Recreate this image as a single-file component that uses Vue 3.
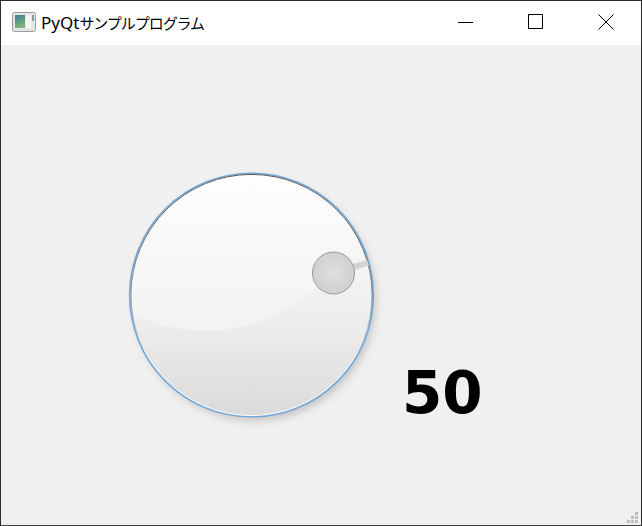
<template>
  <div class="window">
    <div class="titlebar">
      <svg class="app-icon" width="24" height="20" viewBox="0 0 24 20">
        <defs>
          <linearGradient id="iconPane" x1="0" y1="0" x2="0.3" y2="1">
            <stop offset="0" stop-color="#3f7f96" />
            <stop offset="1" stop-color="#7fb37a" />
          </linearGradient>
        </defs>
        <rect x="0.5" y="0.5" width="23" height="19" rx="2" fill="#e4e6e6" stroke="#9a9da0" />
        <rect x="3" y="3" width="10" height="13" fill="url(#iconPane)" />
        <rect x="14" y="3" width="5" height="13" fill="#f4f5f5" />
        <rect x="20" y="3" width="2" height="6" fill="#8d9a9c" />
      </svg>
      <span class="title"><span class="title-latin">PyQt</span><span class="title-kana">サンプルプログラム</span></span>
      <div class="controls">
        <button v-for="c in controls" :key="c.name" class="control" :aria-label="c.name">
          <svg width="16" height="16" viewBox="0 0 16 16">
            <path :d="c.d" fill="none" stroke="#000" stroke-width="1" />
          </svg>
        </button>
      </div>
    </div>
    <div class="content">
      <svg class="dial" width="270" height="270" viewBox="0 0 270 270">
        <defs>
          <linearGradient id="dialBody" x1="0" y1="0" x2="0" y2="1">
            <stop offset="0" stop-color="#ffffff" />
            <stop offset="0.6" stop-color="#eeeeee" />
            <stop offset="1" stop-color="#dadada" />
          </linearGradient>
          <linearGradient id="dialGloss" x1="0" y1="0" x2="0" y2="1">
            <stop offset="0" stop-color="#ffffff" />
            <stop offset="0.5" stop-color="#f8f8f8" />
            <stop offset="1" stop-color="#f3f3f3" />
          </linearGradient>
          <linearGradient id="dialEdge" x1="0" y1="0" x2="0" y2="1">
            <stop offset="0" stop-color="#555555" />
            <stop offset="0.5" stop-color="#8a8a8a" />
            <stop offset="0.78" stop-color="#ffffff" />
            <stop offset="1" stop-color="#ffffff" />
          </linearGradient>
          <radialGradient id="knobFill">
            <stop offset="0" stop-color="#dfdfdf" />
            <stop offset="1" stop-color="#d0d0d0" />
          </radialGradient>
          <clipPath id="dialClip">
            <circle cx="131.5" cy="135" r="121" />
          </clipPath>
          <filter id="dialShadow" x="-20%" y="-20%" width="140%" height="140%">
            <feGaussianBlur stdDeviation="5" />
          </filter>
        </defs>
        <circle cx="135" cy="140" r="120" fill="#a8a8a8" opacity="0.7" filter="url(#dialShadow)" />
        <circle cx="131.5" cy="135" r="121.6" fill="url(#dialBody)" stroke="#72a8d8" stroke-width="2" />
        <g clip-path="url(#dialClip)">
          <path d="M8 150 C60 182 170 190 240 72 L260 0 L0 0 Z" fill="url(#dialGloss)" />
        </g>
        <circle cx="131.5" cy="135" r="120.6" fill="none" stroke="url(#dialEdge)" stroke-width="1" />
        <line x1="232" y1="107.5" x2="248" y2="102.8" stroke="#d4d4d4" stroke-width="6" />
        <circle cx="213.5" cy="113" r="21" fill="url(#knobFill)" stroke="#9c9c9c" stroke-width="1" />
      </svg>
      <div class="value">50</div>
    </div>
    <div class="grip">
      <i v-for="n in gripCells" :key="n" :class="{ off: n === 0 || n === 1 || n === 3 }"></i>
    </div>
  </div>
</template>

<script setup>
const controls = [
  { name: 'minimize', d: 'M0 8.5H15' },
  { name: 'maximize', d: 'M.5 .5H14.5V14.5H.5Z' },
  { name: 'close', d: 'M.5 .5L15.5 15.5M15.5 .5L.5 15.5' }
]
const gripCells = [0, 1, 2, 3, 4, 5, 6, 7, 8]
</script>

<style>
html, body {
  margin: 0;
  background: #f0f0f0;
}
</style>

<style scoped>
.window {
  position: relative;
  box-sizing: border-box;
  width: 642px;
  height: 526px;
  border: 1px solid #2b2b2b;
  border-bottom-color: #444;
  display: flex;
  flex-direction: column;
  background: #f0f0f0;
  overflow: hidden;
}

.titlebar {
  height: 44px;
  flex: none;
  display: flex;
  align-items: center;
  padding-left: 11px;
  background: #fff;
}

.app-icon {
  flex: none;
  margin-top: -2px;
}

.title {
  margin-left: 5px;
  margin-top: -2px;
  font-family: "Noto Sans", "Noto Sans CJK JP", sans-serif;
  color: #000;
  white-space: nowrap;
}

.title-latin {
  font-size: 17px;
}

.title-kana {
  font-family: "Noto Sans CJK JP", sans-serif;
  font-size: 15px;
  letter-spacing: -1.05px;
}

.controls {
  margin-left: auto;
  display: flex;
  margin-top: -2px;
}

.control {
  width: 70px;
  height: 44px;
  padding: 0;
  border: 0;
  background: none;
  display: flex;
  align-items: center;
  justify-content: center;
}

.content {
  flex: 1;
  display: flex;
  align-items: flex-start;
  padding: 115px 0 0 119px;
}

.dial {
  flex: none;
  display: block;
}

.value {
  margin: 198px 0 0 12px;
  font-family: "DejaVu Sans", sans-serif;
  font-weight: 700;
  font-size: 58px;
  line-height: 70px;
  color: #000;
}

/* size grip lies over the window corner */
.grip {
  position: absolute;
  right: 3px;
  bottom: 2px;
  display: grid;
  grid-template-columns: repeat(3, 3px);
  gap: 1px;
}

.grip i {
  width: 3px;
  height: 3px;
  background: #bdbdbd;
}

.grip i.off {
  background: none;
}
</style>
